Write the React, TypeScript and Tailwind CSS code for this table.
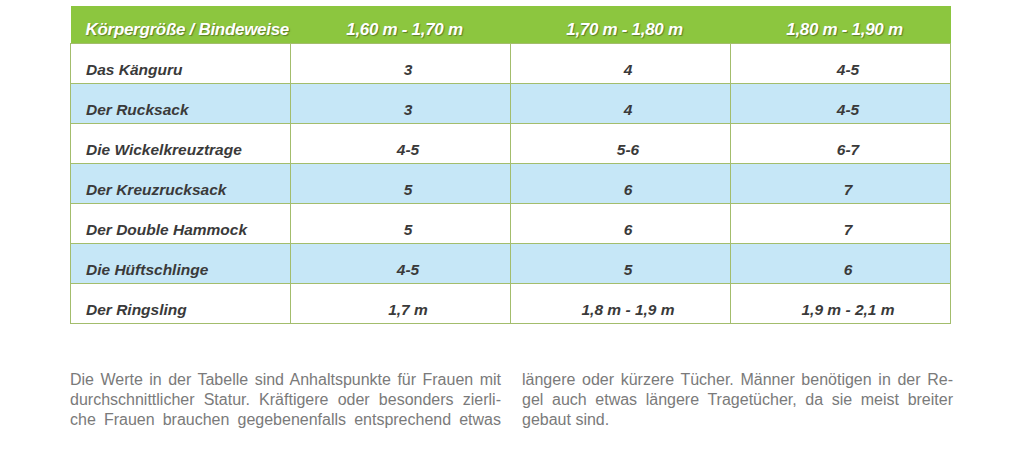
const heads = ['Körpergröße / Bindeweise', '1,60 m - 1,70 m', '1,70 m - 1,80 m', '1,80 m - 1,90 m']

const rows: [string, string, string, string][] = [
  ['Das Känguru', '3', '4', '4-5'],
  ['Der Rucksack', '3', '4', '4-5'],
  ['Die Wickelkreuztrage', '4-5', '5-6', '6-7'],
  ['Der Kreuzrucksack', '5', '6', '7'],
  ['Der Double Hammock', '5', '6', '7'],
  ['Die Hüftschlinge', '4-5', '5', '6'],
  ['Der Ringsling', '1,7 m', '1,8 m - 1,9 m', '1,9 m - 2,1 m'],
]

export default function App() {
  return (
    <div className="w-[1024px] h-[456px] bg-white overflow-hidden font-['Liberation_Sans',Arial,sans-serif]">
      <div className="pt-[6px] pl-[70px]">
        <table className="border-collapse w-[881px] table-fixed">
          <thead>
            <tr className="bg-[#8cc63f] h-[37px]">
              {heads.map((h, i) => (
                <th
                  key={h}
                  className={
                    'w-[220px] pt-[12px] pb-0 text-[17px] leading-[20px] font-bold italic text-white whitespace-nowrap tracking-[-0.3px] [text-shadow:1px_1px_1px_rgba(60,80,20,0.6)] ' +
                    (i === 0 ? 'text-left pl-[15px]' : 'text-center pl-[8px]')
                  }
                >
                  {h}
                </th>
              ))}
            </tr>
          </thead>
          <tbody>
            {rows.map((r, ri) => (
              <tr key={r[0]} className={ri % 2 === 1 ? 'bg-[#c6e7f7] h-[40px]' : 'bg-white h-[40px]'}>
                {r.map((c, ci) => (
                  <td
                    key={ci}
                    className={
                      'border border-[#a3bd6c] pt-[14px] pb-0 text-[15.5px] leading-[18px] font-bold italic text-[#3a3a3a] whitespace-nowrap ' +
                      (ci === 0 ? 'text-left pl-[15px]' : 'text-center pl-[15px]')
                    }
                  >
                    {c}
                  </td>
                ))}
              </tr>
            ))}
          </tbody>
        </table>
      </div>

      <div className="mt-[46px] pl-[70px] flex gap-[21px] text-[16px] leading-[20px] text-[#7a7a7a]">
        <div className="w-[431px]">
          <div className="text-justify [text-align-last:justify]">Die Werte in der Tabelle sind Anhaltspunkte für Frauen mit</div>
          <div className="text-justify [text-align-last:justify]">durchschnittlicher Statur. Kräftigere oder besonders zierli-</div>
          <div className="text-justify [text-align-last:justify]">che Frauen brauchen gegebenenfalls entsprechend etwas</div>
        </div>
        <div className="w-[431px]">
          <div className="text-justify [text-align-last:justify]">längere oder kürzere Tücher. Männer benötigen in der Re-</div>
          <div className="text-justify [text-align-last:justify]">gel auch etwas längere Tragetücher, da sie meist breiter</div>
          <div>gebaut sind.</div>
        </div>
      </div>
    </div>
  )
}
